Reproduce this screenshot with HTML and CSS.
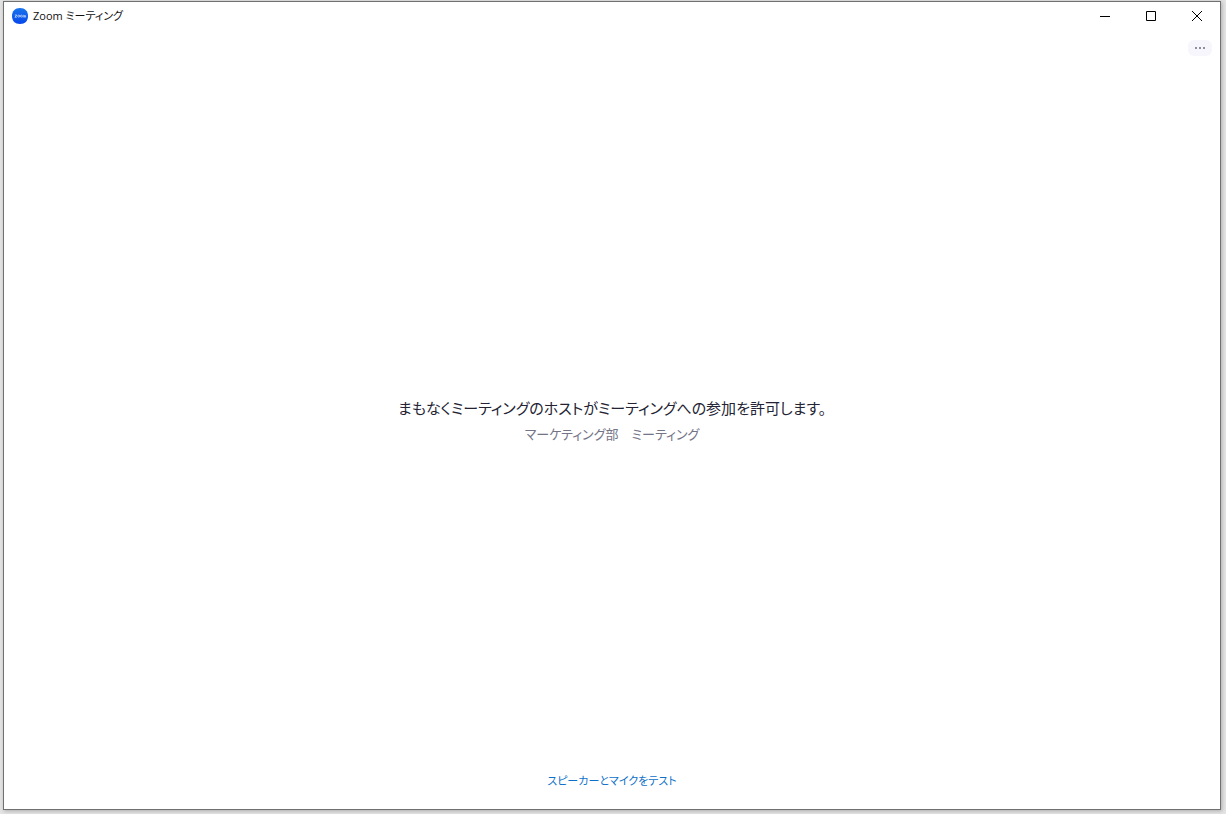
FILE: index.html
```
<!DOCTYPE html>
<html lang="ja">
<head>
<meta charset="utf-8">
<title>Zoom ミーティング</title>
<link rel="stylesheet" href="styles.css">
</head>
<body>
<div class="window">
  <header class="titlebar">
    <svg class="logo" viewBox="0 0 16 16" aria-hidden="true">
      <defs><linearGradient id="logo-fill" x1="0" y1="0" x2="0" y2="1"><stop offset="0" stop-color="#1a74ec"/><stop offset="1" stop-color="#0647ec"/></linearGradient></defs>
      <path d="M8 0C13 0 16 3 16 8s-3 8-8 8-8-3-8-8 3-8 8-8z" fill="url(#logo-fill)"/>
      <g fill="none" stroke="#c5dafc" stroke-width=".8">
        <path d="M2.800 7h2L2.900 9.200h2"/>
        <circle cx="6.700" cy="8.100" r="1"/>
        <circle cx="9.400" cy="8.100" r="1"/>
        <path d="M11.200 9.500V7.700q.6-1 1.200 0v1.800M12.400 7.700q.6-1 1.200 0v1.800"/>
      </g>
    </svg>
    <h1 class="title">Zoom ミーティング</h1>
    <div class="controls">
      <button class="control" type="button" aria-label="最小化"><svg class="glyph" viewBox="0 0 12 12"><path d="M1 6.500h10"/></svg></button>
      <button class="control" type="button" aria-label="最大化"><svg class="glyph" viewBox="0 0 12 12"><path d="M1.500 1.500h9v9h-9z"/></svg></button>
      <button class="control" type="button" aria-label="閉じる"><svg class="glyph" viewBox="0 0 12 12"><path d="M1 1l10 10M11 1L1 11"/></svg></button>
    </div>
  </header>
  <div class="toolbar">
    <button class="more" type="button" aria-label="その他"><svg class="dots" viewBox="0 0 12 4"><path d="M1 1h2v2H1zM5 1h2v2H5zM9 1h2v2H9z"/></svg></button>
  </div>
  <main class="waiting">
    <p class="message">まもなくミーティングのホストがミーティングへの参加を許可します。</p>
    <p class="topic">マーケティング部　ミーティング</p>
  </main>
  <footer class="footer"><a class="test-link" href="#">スピーカーとマイクをテスト</a></footer>
</div>
</body>
</html>
```
FILE: styles.css
```
* { box-sizing: border-box; }

body {
  margin: 0;
  min-height: 100vh;
  display: flex;
  padding: 1px 5px 4px 3px;
  background: #e4e4e4;
  font-family: "Open Sans", "Noto Sans CJK JP", sans-serif;
  font-feature-settings: "palt";
}

.window {
  flex: 1;
  display: flex;
  flex-direction: column;
  border: 1px solid #707070;
  background: #fff;
  box-shadow: 1px 1px 4px #aaa;
}

.titlebar {
  display: flex;
  align-items: center;
  height: 28px;
  padding-left: 8px;
}

.logo { width: 16px; height: 16px; margin-right: 5px; }

.title {
  margin: 0;
  color: #111;
  font-size: 11px;
  font-weight: 400;
  line-height: 16px;
}

.controls { display: flex; margin-left: auto; }

.control {
  display: grid;
  place-items: center;
  width: 46px;
  height: 28px;
  padding: 0;
  border: 0;
  background: none;
}

.glyph {
  width: 12px;
  height: 12px;
  fill: none;
  stroke: #000;
}

.toolbar {
  display: flex;
  justify-content: flex-end;
  padding: 10px 8px 0;
}

.more {
  display: grid;
  place-items: center;
  width: 24px;
  height: 16px;
  padding: 0;
  border: 0;
  border-radius: 6px;
  background: #f7f6fd;
}

.dots { width: 12px; height: 4px; fill: #908f9c; }

.waiting {
  flex: 1;
  display: flex;
  flex-direction: column;
  justify-content: center;
  padding-top: 16px;
  text-align: center;
}

.message, .topic { margin: 0; line-height: 26px; }
.message { color: #232333; font-size: 15px; }
.topic { color: #747487; font-size: 13px; }

.footer {
  padding-bottom: 18px;
  text-align: center;
  line-height: 20px;
}

.test-link {
  color: #0e71c8;
  font-size: 11px;
  text-decoration: none;
}
```
